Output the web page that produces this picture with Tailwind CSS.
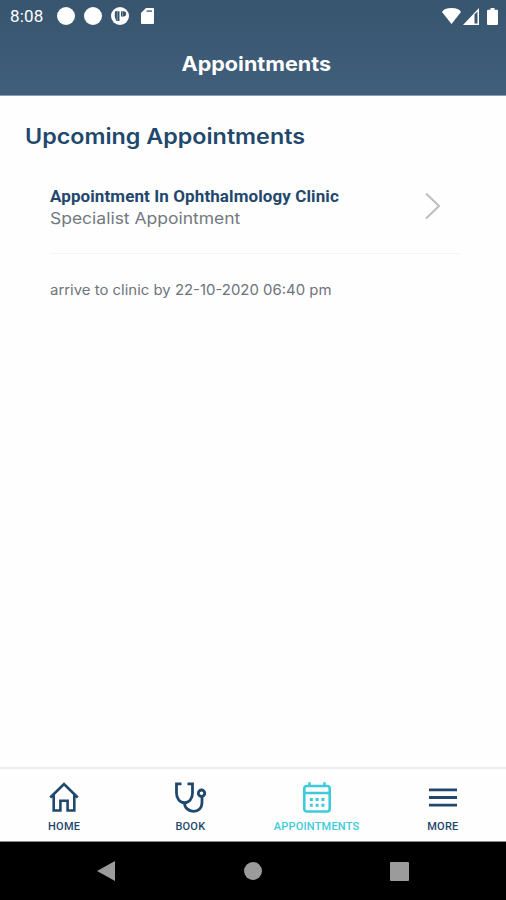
<!DOCTYPE html>
<html lang="en">
<head>
    <meta charset="UTF-8">
    <meta name="viewport" content="width=device-width, initial-scale=1.0">
    <title>Appointments</title>
    <script src="https://cdn.jsdelivr.net/npm/@tailwindcss/browser@4"></script>
</head>
<body class="bg-[#fefefe] font-['Inter',sans-serif] text-[#1f486c]">
    <div class="flex flex-col h-[900px] w-[506px] overflow-hidden">
        <header class="h-24 shrink-0 bg-linear-to-b from-[#38556f] to-[#405f7b] border-b border-[#8b9dae] text-white">
            <!-- Status bar -->
            <div class="h-8 flex items-center pl-[10px] pr-2">
                <span class="w-[47px] font-['Roboto',sans-serif] text-[17px] leading-8 tracking-[0.2px] whitespace-nowrap">8:08</span>
                <div class="flex items-center gap-[9px]">
                    <svg class="w-[18px] h-[18px]" viewBox="0 0 18 18" fill="currentColor"><circle cx="9" cy="9" r="9"/></svg>
                    <svg class="w-[18px] h-[18px]" viewBox="0 0 18 18" fill="currentColor"><circle cx="9" cy="9" r="9"/></svg>
                    <svg class="w-[18px] h-[18px]" viewBox="0 0 18 18">
                        <circle cx="9" cy="9" r="9" fill="#fff"/>
                        <path d="M4 4.200h4.500v9.800H5.500Q3 10 4 4.200z" fill="#38556f"/>
                        <path d="M6.300 4.200v9.500" stroke="#8fa0b0" stroke-width=".8"/>
                        <path d="M10 4.200h2.500a2.500 2.500 0 0 1 0 5.300H10z" fill="#38556f"/>
                        <path d="M11.500 4.200v5" stroke="#8fa0b0" stroke-width=".8"/>
                    </svg>
                    <svg class="w-[13px] h-4 ml-[3px]" viewBox="0 0 13 16">
                        <path d="M5 0h7q1 0 1 1v14q0 1-1 1H1q-1 0-1-1V5z" fill="#fff"/>
                        <path d="M5.500 2.200h5.500v1.800H5.500z" fill="#6f8496"/>
                    </svg>
                </div>
                <div class="ml-auto flex items-center">
                    <svg class="w-[19px] h-4" viewBox="0 0 19 16" fill="currentColor"><path d="M0 4Q2 0 9.500 0T19 4L9.500 16z"/></svg>
                    <svg class="w-4 h-[17px] ml-[2px]" viewBox="0 0 16 17">
                        <path d="M16 0v17H0z" fill="#fff"/>
                        <path d="M11.500 6.500L14.500 3.500v12h-3z" fill="#38556f"/>
                    </svg>
                    <svg class="w-[11px] h-[17px] ml-2" viewBox="0 0 11 17" fill="currentColor"><path d="M3.500 0h4v1.700H10q1 0 1 1V16q0 1-1 1H1q-1 0-1-1V2.700q0-1 1-1h2.500z"/></svg>
                </div>
            </div>
            <div class="h-16 flex justify-center pl-[7px]">
                <h1 class="text-[20px] leading-[65px] font-bold scale-x-[1.078]">Appointments</h1>
            </div>
        </header>

        <main class="flex-1 pl-[25px] pt-[25px]">
            <h2 class="text-[21px] leading-8 font-semibold whitespace-nowrap origin-left scale-x-[1.11]">Upcoming Appointments</h2>

            <div class="ml-[25px] mr-[46px] mt-8">
                <div class="flex items-start h-[69px] border-b border-[#f4f4f4]">
                    <div class="flex-1 whitespace-nowrap">
                        <p class="font-['Roboto',sans-serif] text-[17px] leading-[22px] font-bold tracking-[0.1px]">Appointment In Ophthalmology Clinic</p>
                        <p class="text-[16px] leading-[22px] text-[#737980] origin-left scale-x-[1.093]">Specialist Appointment</p>
                    </div>
                    <svg class="w-4 h-7 mt-[7px] mr-[19px]" viewBox="0 0 16 28" fill="none" stroke="#bdbdbd" stroke-width="2"><path d="M1 1.500L14 14 1 26.500"/></svg>
                </div>
                <p class="mt-[26px] text-[14px] leading-[20px] text-[#6d747c] whitespace-nowrap origin-left scale-x-[1.066]">arrive to clinic by 22-10-2020 06:40 pm</p>
            </div>
        </main>

        <!-- Tab bar -->
        <nav class="h-[74px] shrink-0 grid grid-cols-4 pl-px border-t-2 border-[#ededee] font-['Roboto',sans-serif] text-[11px] font-medium leading-[14px] tracking-[0.2px]">
            <div class="flex flex-col items-center pt-[12px]">
                <svg class="w-8 h-8" viewBox="0 0 32 32" fill="none" stroke="currentColor" stroke-width="2.600"><path d="M2.300 16.500L16 3l13.700 13.500M5.700 13.500v16h6.700v-9.700h7.200v9.700h6.700v-16"/></svg>
                <span class="mt-[7px]">HOME</span>
            </div>
            <div class="flex flex-col items-center pt-[12px]">
                <svg class="w-8 h-8" viewBox="0 0 32 32" fill="none" stroke="currentColor" stroke-width="2.800"><path d="M7.500 2.800H2.500v9.200c0 6 3.500 9.700 8 9.700s8-3.700 8-9.700V2.800h-5M10.500 21.700c0 5 4 8.600 9 8.600s8.500-3.500 8.500-8.500v-6"/><circle cx="27.500" cy="12.200" r="3.200"/></svg>
                <span class="mt-[7px]">BOOK</span>
            </div>
            <div class="flex flex-col items-center pt-[12px] text-[#3dcbdc]">
                <svg class="w-8 h-8" viewBox="0 0 32 32" fill="none" stroke="currentColor" stroke-width="2.600">
                    <rect x="3.300" y="5" width="25.400" height="25.500" rx="2.500"/>
                    <path d="M8.500 1.300V6M23.500 1.300V6M3.300 12h25.400"/>
                    <path d="M8.800 18.500h3M14.600 18.500h3M20.400 18.500h3M8.800 24.200h3M14.600 24.200h3M20.400 24.200h3" stroke-width="3"/>
                </svg>
                <span class="mt-[7px]">APPOINTMENTS</span>
            </div>
            <div class="flex flex-col items-center pt-[12px]">
                <svg class="w-8 h-8" viewBox="0 0 32 32" fill="none" stroke="currentColor" stroke-width="2.800"><path d="M2 8.800h28M2 16.500h28M2 24.200h28"/></svg>
                <span class="mt-[7px]">MORE</span>
            </div>
        </nav>

        <!-- System navigation -->
        <div class="h-[59px] shrink-0 bg-black border-t border-[#8a8a8a] flex items-center justify-between pl-[97px] pr-[97px] text-[#9b9b9b]">
            <svg class="w-[18px] h-5" viewBox="0 0 18 20" fill="currentColor"><path d="M18 0v20L0 10z"/></svg>
            <svg class="w-[18px] h-[18px]" viewBox="0 0 18 18" fill="currentColor"><circle cx="9" cy="9" r="9"/></svg>
            <svg class="w-[19px] h-[19px]" viewBox="0 0 19 19" fill="currentColor"><rect width="19" height="19" rx="1"/></svg>
        </div>
    </div>
</body>
</html>
